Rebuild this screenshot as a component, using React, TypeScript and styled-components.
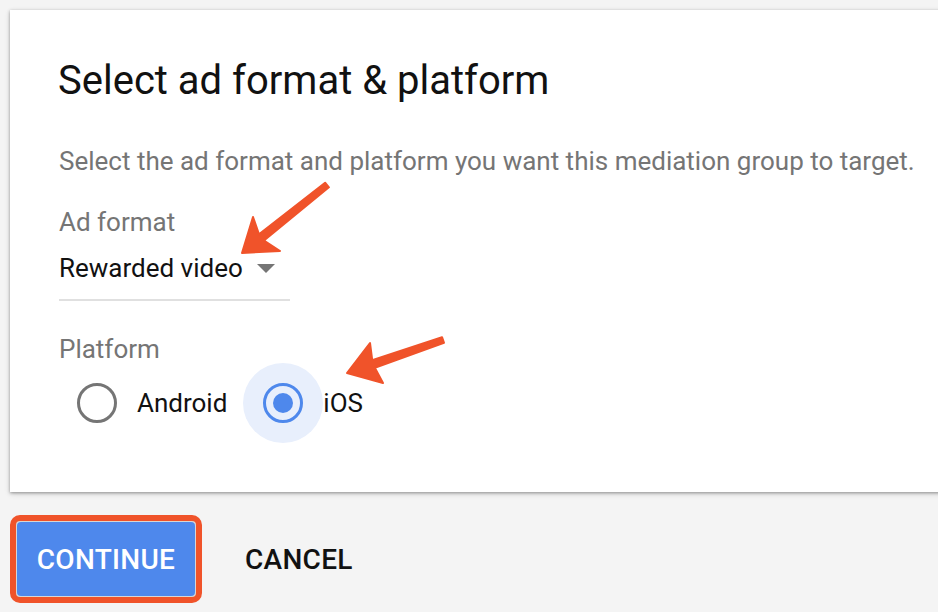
import React from "react";
import styled, { createGlobalStyle } from "styled-components";

const Global = createGlobalStyle`
  html, body { margin: 0; padding: 0; }
  body {
    background: #f4f4f4;
    font-family: Roboto, "Liberation Sans", sans-serif;
    width: 938px;
    height: 612px;
    overflow: hidden;
  }
`;

const Page = styled.div`
  position: relative;
  padding: 10px 0 0 10px;
  height: 602px;
  overflow: hidden;
`;

const Card = styled.section`
  background: #fff;
  width: 960px;
  box-sizing: border-box;
  padding: 47px 0 49px 49px;
  box-shadow: 0 1px 3px rgba(0, 0, 0, 0.35), 0 2px 6px rgba(0, 0, 0, 0.12);
`;

const Title = styled.h1`
  margin: 0 0 0 -1px;
  font-size: 40px;
  line-height: 48px;
  font-weight: 400;
  color: #111;
`;

const Subtitle = styled.p`
  margin: 40px 0 0;
  font-size: 26px;
  line-height: 32px;
  color: #757575;
`;

const FieldLabel = styled.div<{ $gap: number }>`
  margin-top: ${(p) => p.$gap}px;
  font-size: 26px;
  line-height: 32px;
  color: #757575;
`;

const Select = styled.div`
  margin-top: 14px;
  width: 231px;
  display: flex;
  align-items: center;
  padding-bottom: 15px;
  border-bottom: 2px solid #e0e0e0;
  font-size: 26px;
  line-height: 32px;
  color: #111;
`;

const Caret = styled.span`
  margin-left: 14px;
  width: 0;
  height: 0;
  border-left: 9px solid transparent;
  border-right: 9px solid transparent;
  border-top: 9px solid #757575;
`;

const RadioRow = styled.div`
  display: flex;
  align-items: center;
  margin: -2px 0 0 -2px;
`;

const RadioOption = styled.label<{ $last?: boolean }>`
  display: flex;
  align-items: center;
  margin-right: ${(p) => (p.$last ? 0 : 16)}px;
  font-size: 26px;
  color: #111;
`;

const Halo = styled.span<{ $active: boolean }>`
  width: 80px;
  height: 80px;
  border-radius: 50%;
  display: flex;
  align-items: center;
  justify-content: center;
  background: ${(p) => (p.$active ? "#e8effc" : "transparent")};
`;

const Ring = styled.span<{ $active: boolean }>`
  width: 40px;
  height: 40px;
  box-sizing: border-box;
  border-radius: 50%;
  border: 3.5px solid ${(p) => (p.$active ? "#4e88ec" : "#757575")};
  display: flex;
  align-items: center;
  justify-content: center;
`;

const Dot = styled.span`
  width: 20px;
  height: 20px;
  border-radius: 50%;
  background: #4e88ec;
`;

const Footer = styled.div`
  display: flex;
  align-items: center;
  margin-top: 23px;
`;

const Highlight = styled.div`
  border: 6px solid #f0532a;
  border-radius: 10px;
  padding: 1px;
  background: #d6d6d6;
  display: flex;
`;

const PrimaryButton = styled.button`
  width: 178px;
  height: 74px;
  border: none;
  border-radius: 4px;
  background: #4e88ec;
  color: #fff;
  font-family: Roboto, "Liberation Sans", sans-serif;
  font-size: 28px;
  font-weight: 500;
  letter-spacing: 0.3px;
  padding: 0;
`;

const TextButton = styled.button`
  margin-left: 43px;
  border: none;
  background: transparent;
  padding: 0;
  color: #111;
  font-family: Roboto, "Liberation Sans", sans-serif;
  font-size: 28px;
  font-weight: 500;
  letter-spacing: 0.3px;
`;

const Overlay = styled.svg`
  position: absolute;
  left: 0;
  top: 0;
  pointer-events: none;
`;

export default function App() {
  return (
    <>
      <Global />
      <Page>
        <Card>
          <Title>Select ad format &amp; platform</Title>
          <Subtitle>
            Select the ad format and platform you want this mediation group to target.
          </Subtitle>
          <FieldLabel $gap={29}>Ad format</FieldLabel>
          <Select>
            Rewarded video
            <Caret />
          </Select>
          <FieldLabel $gap={32}>Platform</FieldLabel>
          <RadioRow>
            <RadioOption>
              <Halo $active={false}>
                <Ring $active={false} />
              </Halo>
              Android
            </RadioOption>
            <RadioOption $last>
              <Halo $active>
                <Ring $active>
                  <Dot />
                </Ring>
              </Halo>
              iOS
            </RadioOption>
          </RadioRow>
        </Card>
        <Footer>
          <Highlight>
            <PrimaryButton>CONTINUE</PrimaryButton>
          </Highlight>
          <TextButton>CANCEL</TextButton>
        </Footer>
        <Overlay width="938" height="612" viewBox="0 0 938 612">
          <polygon
            points="242,253 253,217 259,234.3 325.1,182.7 328.9,187.3 264,240.5 280,251"
            fill="#f0532a"
            stroke="#f0532a"
            strokeWidth="2"
            strokeLinejoin="round"
          />
          <polygon
            points="347,373 370,343 372.2,360.1 442,337.2 444,342.8 374.8,367.7 383,383"
            fill="#f0532a"
            stroke="#f0532a"
            strokeWidth="2"
            strokeLinejoin="round"
          />
        </Overlay>
      </Page>
    </>
  );
}
